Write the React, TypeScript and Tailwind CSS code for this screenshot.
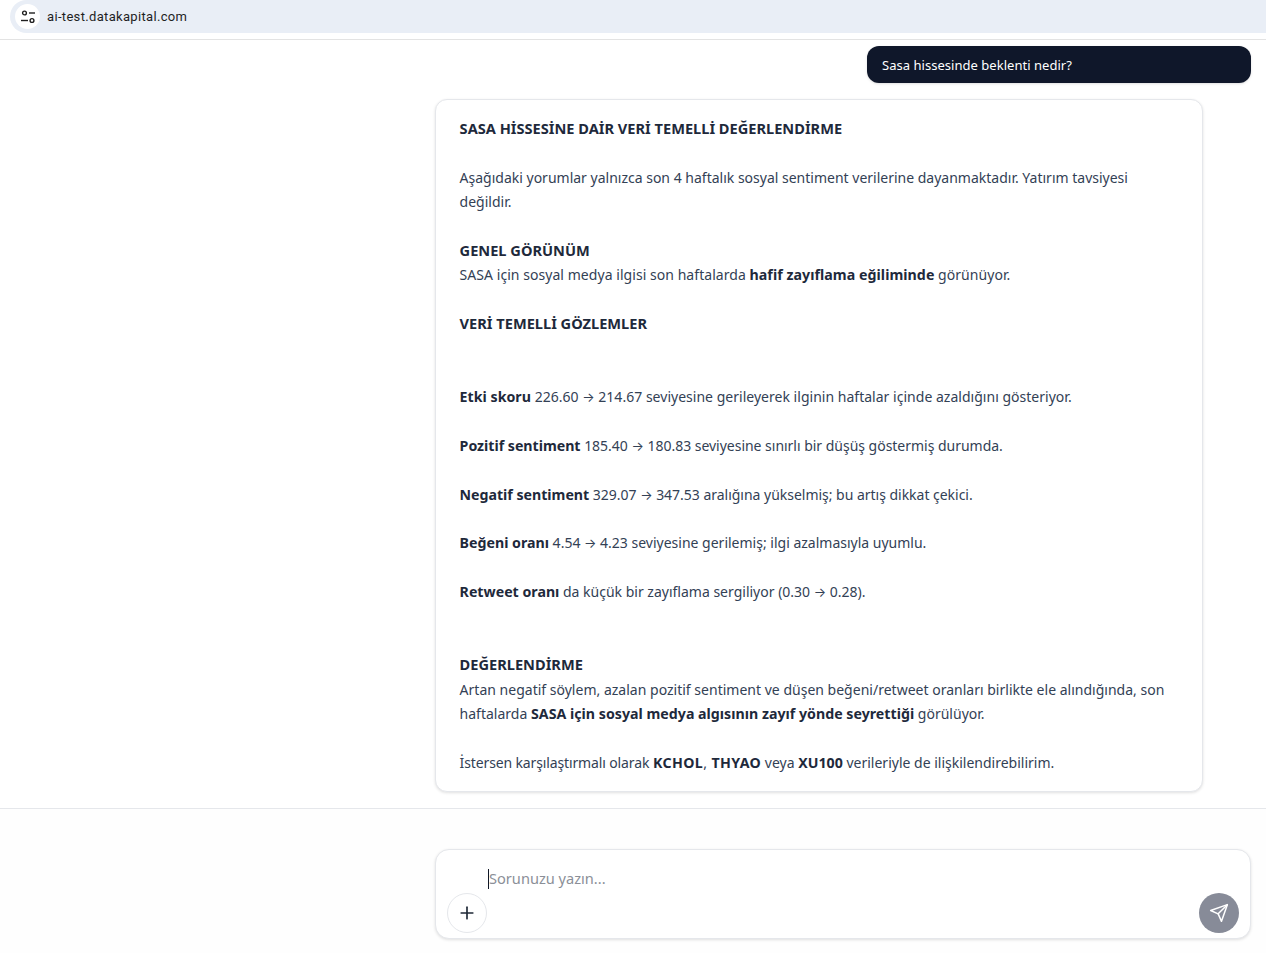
import React from "react";
import { Plus } from "lucide-react";

function B({ children }: { children: React.ReactNode }) {
  return <strong className="font-bold text-[14.2px] text-[#1e293b]">{children}</strong>;
}

function Arrow() {
  return <span className="font-['Inter',sans-serif] text-[13px]">→</span>;
}

function H({ children }: { children: React.ReactNode }) {
  return <div className="font-bold text-[#1e293b] text-[14.6px] -mt-[1px] mb-[1px]">{children}</div>;
}

function Gap({ lines = 1 }: { lines?: number }) {
  return <div className={lines === 2 ? "h-[48.8px]" : "h-[24.4px]"} />;
}

export default function App() {
  return (
    <div className="h-[953px] w-[1266px] overflow-hidden bg-white flex flex-col font-['Noto_Sans','Open_Sans',sans-serif]">
      <header className="h-[40px] shrink-0 border-b border-[#e3e3e3] bg-white pl-[10px]">
        <div className="h-[33px] rounded-l-[17px] bg-[#e9eef6] flex items-center pl-[5px]">
          <div className="w-[25px] h-[25px] rounded-full bg-white flex items-center justify-center">
            <svg width="16" height="16" viewBox="0 0 16 16" fill="none" stroke="#1f1f1f" strokeWidth="1.4">
              <circle cx="4.5" cy="4" r="1.9" />
              <path d="M9 4h6" />
              <path d="M1 11.5h7" />
              <circle cx="12" cy="11.5" r="1.9" />
            </svg>
          </div>
          <span className="ml-[7px] text-[13px] text-[#1f1f1f] font-['Roboto',sans-serif] tracking-[0.33px]">ai-test.datakapital.com</span>
        </div>
      </header>

      <main className="h-[769px] shrink-0 border-b border-[#e5e7eb] flex flex-col">
        <div className="flex justify-end pt-[6px] pr-[15px]">
          <div className="w-[384px] h-[37px] rounded-[12px] bg-[#0f172a] text-white text-[13px] tracking-[0.03px] leading-[38px] pl-[15px] shadow-sm">
            Sasa hissesinde beklenti nedir?
          </div>
        </div>
        <div className="mt-[16px] ml-[435px] w-[768px] rounded-[12px] border border-[#e5e7eb] bg-white shadow-[0_1px_3px_rgba(0,0,0,0.12)] pl-[23.6px] pr-[24px] pt-[16.7px] pb-[15.3px] text-[14px] leading-[24.4px] text-[#334155]">
          <H>SASA HİSSESİNE DAİR VERİ TEMELLİ DEĞERLENDİRME</H>
          <Gap />
          <div className="mt-[0.4px] -mb-[0.4px]">Aşağıdaki yorumlar yalnızca son 4 haftalık sosyal sentiment verilerine dayanmaktadır. Yatırım tavsiyesi değildir.</div>
          <Gap />
          <H>GENEL GÖRÜNÜM</H>
          <div className="tracking-[0.05px]">SASA için sosyal medya ilgisi son haftalarda <B>hafif zayıflama eğiliminde</B> görünüyor.</div>
          <Gap />
          <H>VERİ TEMELLİ GÖZLEMLER</H>
          <Gap lines={2} />
          <div className="tracking-[0.02px]"><B>Etki skoru</B> 226.60 <Arrow /> 214.67 seviyesine gerileyerek ilginin haftalar içinde azaldığını gösteriyor.</div>
          <Gap />
          <div className="tracking-[-0.02px]"><B>Pozitif sentiment</B> 185.40 <Arrow /> 180.83 seviyesine sınırlı bir düşüş göstermiş durumda.</div>
          <Gap />
          <div className="tracking-[-0.02px]"><B>Negatif sentiment</B> 329.07 <Arrow /> 347.53 aralığına yükselmiş; bu artış dikkat çekici.</div>
          <Gap />
          <div><B>Beğeni oranı</B> 4.54 <Arrow /> 4.23 seviyesine gerilemiş; ilgi azalmasıyla uyumlu.</div>
          <Gap />
          <div><B>Retweet oranı</B> da küçük bir zayıflama sergiliyor (0.30 <Arrow /> 0.28).</div>
          <Gap lines={2} />
          <H>DEĞERLENDİRME</H>
          <div className="tracking-[0.01px]">Artan negatif söylem, azalan pozitif sentiment ve düşen beğeni/retweet oranları birlikte ele alındığında, son haftalarda <B>SASA için sosyal medya algısının zayıf yönde seyrettiği</B> görülüyor.</div>
          <Gap />
          <div><span className="tracking-[-0.13px]">İstersen karşılaştırmalı olarak</span> <span className="tracking-[0.4px]"><B>KCHOL</B>, <B>THYAO</B></span> veya <B>XU100</B> verileriyle de ilişkilendirebilirim.</div>
        </div>
      </main>

      <footer className="flex-1 pt-[40px] pl-[435px] bg-[#fefefe]">
        <div className="relative w-[816px] h-[90px] rounded-[14px] border border-[#e5e7eb] bg-white shadow-[0_1px_3px_rgba(0,0,0,0.12)]">
          <div className="pl-[52px] pt-[17px] flex items-center h-[40px]">
            <span className="w-px h-[20px] bg-[#111827]" />
            <span className="text-[14.6px] text-[#8b8f98]">Sorunuzu yazın...</span>
          </div>
          <div className="absolute left-[11px] top-[42px] mt-px w-[40px] h-[40px] rounded-full border border-[#e5e7eb] bg-white flex items-center justify-center">
            <Plus size={20} color="#1f2937" strokeWidth={2} />
          </div>
          <div className="absolute right-[11px] top-[42px] mt-px w-[40px] h-[40px] rounded-full bg-[#878b98] flex items-center justify-center">
            <svg width="20" height="20" viewBox="0 0 24 24" fill="none" stroke="#ffffff" strokeWidth="1.8" strokeLinecap="round" strokeLinejoin="round">
              <path d="m22 2-7 20-4-9-9-4Z" />
              <path d="M22 2 11 13" />
            </svg>
          </div>
        </div>
      </footer>
    </div>
  );
}
